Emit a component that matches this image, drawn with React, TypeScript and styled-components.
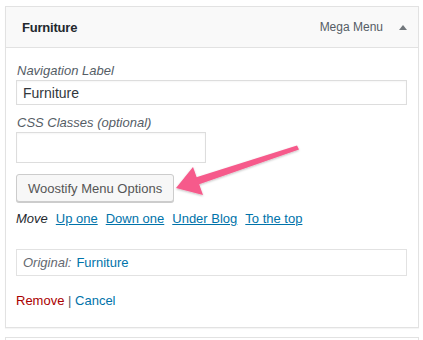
import React from "react";
import styled, { createGlobalStyle } from "styled-components";

const Global = createGlobalStyle`
  body {
    margin: 0;
    background: #fff;
    font-family: "Liberation Sans", Arial, sans-serif;
    font-size: 13px;
    color: #23282d;
  }
`;

const Page = styled.div`
  position: relative;
  padding: 6px 5px 0;
  height: 334px;
  overflow: hidden;
`;

const Panel = styled.div`
  width: 414px;
  box-sizing: border-box;
  border: 1px solid #e2e2e2;
  box-shadow: 0 1px 1px rgba(0, 0, 0, 0.04);
  background: #fff;
`;

const Header = styled.div`
  display: flex;
  align-items: center;
  height: 40px;
  padding: 0 11px 0 16px;
  background: #f9f9f9;
  border-bottom: 1px solid #e2e2e2;
`;

const Title = styled.div`
  flex: 1;
  font-weight: 600;
  font-size: 13px;
  color: #23282d;
  letter-spacing: -0.2px;
`;

const ItemType = styled.div`
  font-size: 12px;
  color: #555d66;
  margin-right: 16px;
`;

const Toggle = styled.div`
  width: 0;
  height: 0;
  border-left: 4px solid transparent;
  border-right: 4px solid transparent;
  border-bottom: 5px solid #72777c;
`;

const Body = styled.div`
  padding: 16px 11px 18px 10px;
`;

const Label = styled.div`
  font-style: italic;
  font-size: 13px;
  color: #555d66;
  line-height: 14px;
  margin-left: 1px;
`;

const Input = styled.div<{ $w?: number; $h: number }>`
  width: ${(p) => (p.$w ? `${p.$w}px` : "auto")};
  height: ${(p) => p.$h}px;
  box-sizing: border-box;
  border: 1px solid #ddd;
  box-shadow: inset 0 1px 2px rgba(0, 0, 0, 0.04);
  display: flex;
  align-items: center;
  padding: 0 6px;
  font-size: 14px;
  color: #32373c;
  margin: 2px 0 11px;
`;

const Button = styled.div`
  display: inline-flex;
  align-items: center;
  height: 28px;
  box-sizing: border-box;
  padding: 0 11px;
  border: 1px solid #ccc;
  border-radius: 3px;
  background: #f7f7f7;
  box-shadow: 0 1px 0 #ccc;
  font-size: 13px;
  color: #555;
`;

const MoveRow = styled.div`
  display: flex;
  gap: 8px;
  margin-top: 9px;
  font-size: 13px;
  line-height: 16px;
`;

const MoveLabel = styled.span`
  font-style: italic;
  color: #23282d;
`;

const Link = styled.a<{ $red?: boolean; $plain?: boolean }>`
  color: ${(p) => (p.$red ? "#a00" : "#0073aa")};
  text-decoration: ${(p) => (p.$red || p.$plain ? "none" : "underline")};
`;

const Original = styled.div`
  margin-top: 22px;
  height: 27px;
  box-sizing: border-box;
  border: 1px solid #e2e2e2;
  display: flex;
  align-items: center;
  padding: 0 6px;
  gap: 5px;
  font-size: 13px;
`;

const OriginalLabel = styled.span`
  font-style: italic;
  color: #646970;
`;

const Actions = styled.div`
  margin-top: 17px;
  font-size: 13px;
  line-height: 16px;
  color: #555d66;
`;

const NextPanel = styled.div`
  width: 414px;
  height: 20px;
  box-sizing: border-box;
  margin-top: 9px;
  border: 1px solid #e2e2e2;
  background: #fff;
`;

const Arrow = styled.svg`
  position: absolute;
  left: 0;
  top: 0;
  pointer-events: none;
`;

export default function App() {
  return (
    <>
      <Global />
      <Page>
        <Panel>
          <Header>
            <Title>Furniture</Title>
            <ItemType>Mega Menu</ItemType>
            <Toggle />
          </Header>
          <Body>
            <Label>Navigation Label</Label>
            <Input $h={25}>Furniture</Input>
            <Label>CSS Classes (optional)</Label>
            <Input $w={190} $h={31} />
            <Button>Woostify Menu Options</Button>
            <MoveRow>
              <MoveLabel>Move</MoveLabel>
              <Link>Up one</Link>
              <Link>Down one</Link>
              <Link>Under Blog</Link>
              <Link>To the top</Link>
            </MoveRow>
            <Original>
              <OriginalLabel>Original:</OriginalLabel>
              <Link as="span" $plain>
                Furniture
              </Link>
            </Original>
            <Actions>
              <Link $red>Remove</Link> | <Link as="span" $plain>Cancel</Link>
            </Actions>
          </Body>
        </Panel>
        <NextPanel />
        <Arrow width="423" height="340" viewBox="0 0 423 340">
          <defs>
            <filter id="sh" x="-20%" y="-20%" width="140%" height="140%">
              <feDropShadow dx="0" dy="1" stdDeviation="1" floodColor="#000" floodOpacity="0.25" />
            </filter>
          </defs>
          <g filter="url(#sh)" fill="#f65a8b">
            <polygon points="297,145.5 299,149.5 197,185 194,178" />
            <polygon points="176,188 193,167 203,195" />
          </g>
        </Arrow>
      </Page>
    </>
  );
}
